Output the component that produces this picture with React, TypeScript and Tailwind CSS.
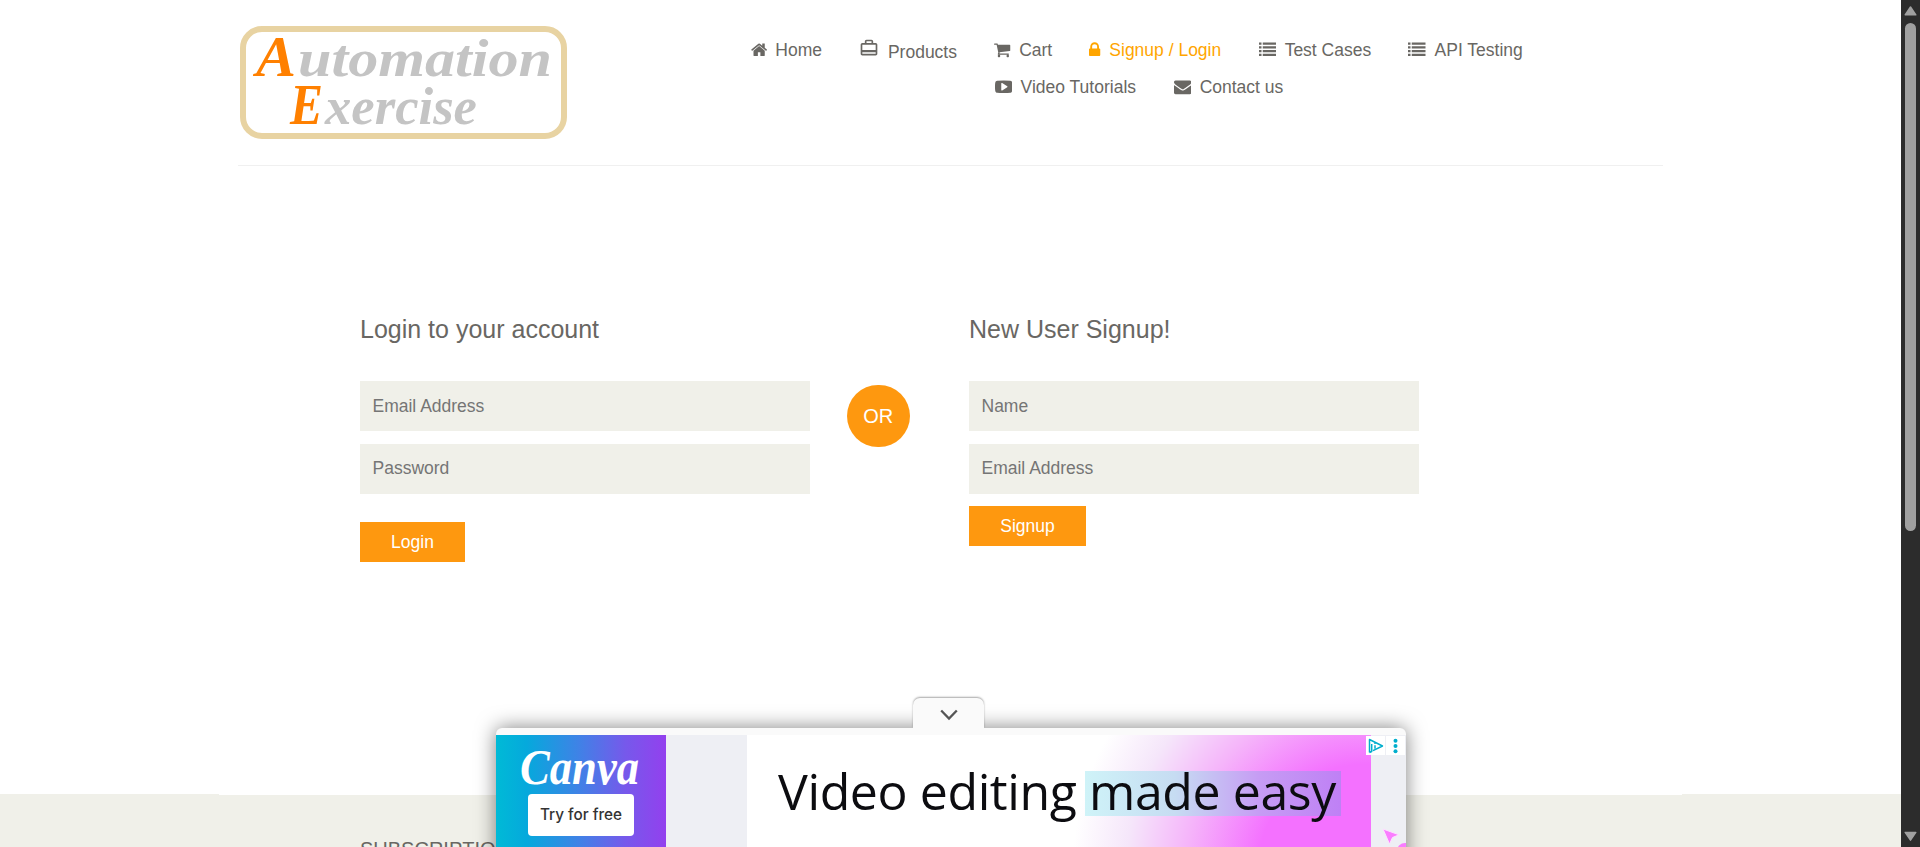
import type { ReactNode } from "react";

const paths = {
  home: "M1472 992v480q0 26-19 45t-45 19h-384v-384h-256v384h-384q-26 0-45-19t-19-45v-480q0-1 .5-3t.5-3l575-474 575 474q1 2 1 6zm223-69l-62 74q-8 9-21 11h-3q-13 0-21-7l-692-577-692 577q-12 8-24 7-13-2-21-11l-62-74q-8-10-7-23.5t11-21.5l719-599q32-26 76-26t76 26l244 204v-195q0-14 9-23t23-9h192q14 0 23 9t9 23v408l219 182q10 8 11 21.5t-7 23.5z",
  cart: "M704 1536q0 52-38 90t-90 38-90-38-38-90 38-90 90-38 90 38 38 90zm896 0q0 52-38 90t-90 38-90-38-38-90 38-90 90-38 90 38 38 90zm128-1088v512q0 24-16.5 42.5t-40.5 21.5l-1044 122q13 60 13 70 0 16-24 64h920q26 0 45 19t19 45-19 45-45 19h-1024q-26 0-45-19t-19-45q0-11 8-31.5t16-36 21.5-40 15.5-29.5l-177-823h-204q-26 0-45-19t-19-45 19-45 45-19h256q16 0 28.5 6.5t19.5 15.5 13 24.5 8 26 5.5 29.5 4.5 26h1201q26 0 45 19t19 45z",
  lock: "M640 768h512v-192q0-106-75-181t-181-75-181 75-75 181v192zm832 96v576q0 40-28 68t-68 28h-960q-40 0-68-28t-28-68v-576q0-40 28-68t68-28h32v-192q0-184 132-316t316-132 316 132 132 316v192h32q40 0 68 28t28 68z",
  list: "M0 160h256v224h-256zM0 544h256v224h-256zM0 928h256v224h-256zM0 1312h256v224h-256zM384 160h1408v224h-1408zM384 544h1408v224h-1408zM384 928h1408v224h-1408zM384 1312h1408v224h-1408z",
  video: "M1280 896q0-37-30-54l-512-320q-31-20-65-2-33 18-33 56v640q0 38 33 56 16 8 31 8 20 0 34-10l512-320q30-17 30-54zm512 0q0 96-1 150t-8.5 136.5-22.5 147.5q-16 73-69 123t-124 58q-222 25-671 25t-671-25q-71-8-124.5-58t-69.5-123q-14-65-21.5-147.5t-8.5-136.5-1-150 1-150 8.5-136.5 22.5-147.5q16-73 69-123t124-58q222-25 671-25t671 25q71 8 124.5 58t69.5 123q14 65 21.5 147.5t8.5 136.5 1 150z",
  mail: "M1792 710v794q0 66-47 113t-113 47h-1472q-66 0-113-47t-47-113v-794q44 49 101 87 362 246 497 345 57 42 92.5 65.5t94.5 48 110 24.5h2q51 0 110-24.5t94.5-48 92.5-65.5q170-123 498-345 57-39 100-87zm0-294q0 79-49 151t-122 123q-376 261-468 325-10 7-42.5 31t-54 38.5-52 32.5-57.5 27-50 9h-2q-23 0-50-9t-57.5-27-52-32.5-54-38.5-42.5-31q-91-64-262-182.5t-205-142.5q-62-42-117-115.5t-55-136.5q0-78 41.5-130t118.5-52h1472q65 0 112.5 47t47.5 113z",
  bag: "M20 6h-3V4c0-1.11-.89-2-2-2H9c-1.11 0-2 .89-2 2v2H4c-1.11 0-2 .89-2 2v11c0 1.11.89 2 2 2h16c1.11 0 2-.89 2-2V8c0-1.11-.89-2-2-2zM9 4h6v2H9V4zm11 15H4v-2h16v2zm0-4.6H4V8h16z",
};

function Glyph({ d, box, className }: { d: string; box: string; className: string }) {
  return (
    <svg viewBox={box} className={className} fill="currentColor" fillRule="evenodd">
      <path d={d} />
    </svg>
  );
}

function NavItem({ icon, label, active }: { icon: ReactNode; label: string; active?: boolean }) {
  return (
    <li>
      <a className={active ? "flex items-center gap-[8.6px] text-[#ffa500]" : "flex items-center gap-[8.6px]"}>
        {icon}
        <span>{label}</span>
      </a>
    </li>
  );
}

function Logo() {
  return (
    <svg viewBox="0 0 327 113" className="block h-[113px] w-[327px]">
      <rect x="3" y="3" width="321" height="107" rx="19" fill="#fff" stroke="#e8d3a2" strokeWidth="6" />
      <g fontFamily="'Liberation Serif', serif" fontStyle="italic" fontWeight="700">
        <text x="16" y="50" fontSize="58" fill="#ff8000" textLength="40" lengthAdjust="spacingAndGlyphs">A</text>
        <text x="58" y="50" fontSize="53" fill="#c4c4c4" textLength="254" lengthAdjust="spacingAndGlyphs">utomation</text>
        <text x="50" y="98" fontSize="58" fill="#ff8000" textLength="33" lengthAdjust="spacingAndGlyphs">E</text>
        <text x="85" y="98" fontSize="53" fill="#c4c4c4" textLength="152" lengthAdjust="spacingAndGlyphs">xercise</text>
      </g>
    </svg>
  );
}

function Field({ type, placeholder, className }: { type: string; placeholder: string; className?: string }) {
  return (
    <input
      type={type}
      placeholder={placeholder}
      className={`mb-[13px] block h-[50px] w-full bg-[#f0f0e9] px-[12.5px] text-[17.5px] outline-none placeholder:text-[#757575] ${className ?? ""}`}
    />
  );
}

function AdBanner() {
  return (
    <aside className="absolute left-[496px] top-[698px] flex w-[910px] flex-col">
      <div className="relative z-10 ml-[417px] flex h-[30px] w-[71px] items-center justify-center rounded-t-[7px] bg-[#fafafa] pt-1 shadow-[0_-1px_2px_rgba(0,0,0,0.35)] [clip-path:inset(-6px_-6px_0_-6px)]">
        <svg viewBox="0 0 18 12" className="h-3 w-[18px]" fill="none" stroke="#555" strokeWidth="2.3">
          <path d="M1.2 1.5 9 9.5 16.8 1.5" />
        </svg>
      </div>
      <div className="h-[140px] rounded-t-[6px] bg-[#fafafa] pt-[7px] shadow-[0_0_20px_rgba(0,0,0,0.5)]">
        <div className="flex h-[133px] overflow-hidden">
          <div className="flex w-[170px] flex-col items-center bg-[linear-gradient(90deg,#00bad6_0%,#05a9dc_18%,#3e83e6_48%,#7659eb_76%,#9340ee_100%)]">
            <svg viewBox="0 0 124 48" className="mt-2 h-12 w-[124px]">
              <text x="1" y="41" fontFamily="'Liberation Serif', serif" fontStyle="italic" fontWeight="700" fontSize="50" fill="#fff" textLength="119" lengthAdjust="spacingAndGlyphs">Canva</text>
            </svg>
            <div className="mt-[3px] flex h-[42px] w-[106px] items-center justify-center rounded-[4px] bg-white font-['Inter',sans-serif] text-[15.3px] font-medium text-[#333]">
              Try for free
            </div>
          </div>
          <div className="w-[81px] bg-[#eeeff4]" />
          <div className="flex w-[624px] items-start bg-white bg-[radial-gradient(ellipse_300px_280px_at_620px_130px,#f471ff_0%,#f471ff_36%,#f5b4fa_60%,#f5e6fa_80%,#ffffff_98%)] pl-[31px] pt-9">
            <div className="flex h-[45px] items-center whitespace-nowrap font-['Open_Sans',sans-serif] text-[50px] tracking-[-0.4px] text-[#0c0c10]">
              <span className="-mt-1 w-[307px]">Video editing</span>
              <span className="flex h-[45px] w-[256px] items-center bg-[linear-gradient(90deg,#cff3f8_0%,#c6dcf2_35%,#c69cf4_68%,#bf80f5_100%)] pb-1 pl-1">made easy</span>
            </div>
          </div>
          <div className="relative w-[35px] bg-[#eeeff4]">
            <div className="absolute -left-[5px] top-px flex gap-px">
              <div className="flex h-[19px] w-[19px] items-center justify-center bg-white">
                <svg viewBox="0 0 16 16" className="h-4 w-4" fill="none" stroke="#00aecd" strokeWidth="1.5" strokeLinejoin="round">
                  <path d="M1.5 14.5v-13L14.5 8 5 12.6M1.5 14.5l2.2-1V6" />
                  <path d="M7 4.8v1.2M7 7.2v3.6" />
                </svg>
              </div>
              <div className="flex h-[19px] w-[19px] items-center justify-center bg-white">
                <svg viewBox="0 0 5 16" className="h-4 w-[5px]" fill="#00aecd">
                  <circle cx="2.5" cy="2.8" r="2" />
                  <circle cx="2.5" cy="8" r="2" />
                  <circle cx="2.5" cy="13.2" r="2" />
                </svg>
              </div>
            </div>
            <svg viewBox="0 0 24 20" className="absolute left-[11px] top-[92px] h-5 w-6">
              <path d="M1 2 17 7.8 10.5 10.5 7.5 17Z" fill="#fa7dff" stroke="#fde2ff" strokeWidth="1" />
              <circle cx="23" cy="24" r="8" fill="#f97cff" />
            </svg>
          </div>
        </div>
      </div>
    </aside>
  );
}

export default function App() {
  return (
    <div className="relative flex h-[847px] w-[1920px] overflow-hidden bg-white font-['Liberation_Sans',Arial,sans-serif] text-[17.5px] text-[#696763]">
      <div className="flex w-[1901px] flex-col">
        <header className="ml-[238px] flex h-[166px] w-[1425px] shrink-0 border-b border-[#f0f0f0] pl-0.5 pt-[26px]">
          <div className="w-[510.5px]">
            <Logo />
          </div>
          <nav className="pt-[5.5px] leading-[37px]">
            <ul className="flex gap-[37.3px]">
              <NavItem icon={<Glyph d={paths.home} box="64 0 1664 1792" className="h-[17.5px] w-[16.25px]" />} label="Home" />
              <li>
                <a className="flex items-center gap-[8.6px]">
                  <Glyph d={paths.bag} box="0 0 24 24" className="-mt-1 size-5" />
                  <span className="pt-[3px] leading-[34px]">Products</span>
                </a>
              </li>
              <NavItem icon={<Glyph d={paths.cart} box="64 0 1664 1792" className="h-[17.5px] w-[16.25px]" />} label="Cart" />
              <NavItem active icon={<Glyph d={paths.lock} box="320 0 1152 1792" className="h-[17.5px] w-[11.25px]" />} label="Signup / Login" />
              <NavItem icon={<Glyph d={paths.list} box="0 0 1792 1792" className="size-[17.5px]" />} label="Test Cases" />
              <NavItem icon={<Glyph d={paths.list} box="0 0 1792 1792" className="size-[17.5px]" />} label="API Testing" />
            </ul>
            <ul className="flex gap-[37.5px] pl-[244px]">
              <NavItem icon={<Glyph d={paths.video} box="0 0 1792 1792" className="size-[17.5px]" />} label="Video Tutorials" />
              <NavItem icon={<Glyph d={paths.mail} box="0 0 1792 1792" className="size-[17.5px]" />} label="Contact us" />
            </ul>
          </nav>
        </header>

        <main className="flex h-[628px] shrink-0 items-start pl-[360px] pt-[149px]">
          <form className="w-[450px]">
            <h2 className="mb-[37px] text-[25px] leading-[29px]">Login to your account</h2>
            <Field type="email" placeholder="Email Address" />
            <Field type="password" placeholder="Password" className="pb-0.5" />
            <button type="button" className="mt-7 flex h-10 w-[105px] items-center justify-center bg-[#fe980f] text-white">Login</button>
          </form>
          <div className="ml-[37px] mr-[59.5px] mt-[70px] flex h-[62px] w-[62.5px] items-center justify-center rounded-full bg-[#fe980f] text-[20px] text-white">OR</div>
          <form className="w-[450px]">
            <h2 className="mb-[37px] text-[25px] leading-[29px]">New User Signup!</h2>
            <Field type="text" placeholder="Name" />
            <Field type="email" placeholder="Email Address" className="pb-0.5" />
            <button type="button" className="-mt-px flex h-10 w-[117px] items-center justify-center bg-[#fe980f] text-white">Signup</button>
          </form>
        </main>

        <footer className="h-[53px] shrink-0 bg-[#f0f0e9]">
          <div className="mx-[219px] border-t border-white pl-[141px] pt-[42px]">
            <h2 className="text-[20px] leading-6">SUBSCRIPTION</h2>
          </div>
        </footer>
      </div>

      <div className="flex w-[19px] flex-col items-center bg-[#2c2c2c] pt-[5px] pb-[5px]">
        <svg viewBox="0 0 13 11" className="h-[11px] w-[13px]" fill="#a0a0a0" stroke="#a0a0a0" strokeWidth="1.5" strokeLinejoin="round">
          <path d="M6.5 2 11.8 9.8H1.2Z" />
        </svg>
        <div className="mt-[7px] h-[508px] w-[11px] rounded-full bg-[#a0a0a0]" />
        <svg viewBox="0 0 13 11" className="mt-auto h-[11px] w-[13px]" fill="#a0a0a0" stroke="#a0a0a0" strokeWidth="1.5" strokeLinejoin="round">
          <path d="M6.5 9.2 1.2 1.4h10.6Z" />
        </svg>
      </div>

      <AdBanner />
    </div>
  );
}
